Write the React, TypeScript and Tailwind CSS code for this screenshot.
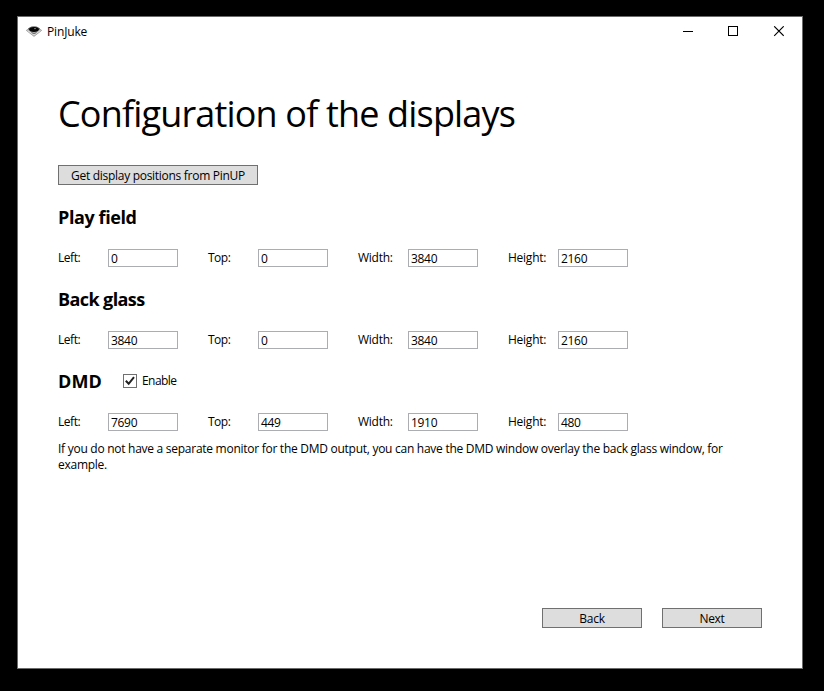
import React from "react";

type Area = { left: string; top: string; width: string; height: string };

function AppIcon() {
  return (
    <svg width="16" height="12" viewBox="0 0 16 12" className="shrink-0">
      <path d="M0.3 5.4 3 3.4H13L15.7 5.4 8 11.4Z" fill="#b4b4b4" stroke="#8a8a8a" strokeWidth="0.6" />
      <path d="M2 3.6Q8 -1.8 14 3.6L13 5H3Z" fill="#5c5c5c" />
      <path d="M3.4 2.9Q8 0 12.6 2.9" fill="none" stroke="#a8a8a8" strokeWidth="0.8" />
      <ellipse cx="8" cy="4.5" rx="4.8" ry="2.4" fill="#050505" />
      <circle cx="9" cy="3.6" r="0.6" fill="#ddd" />
      <path d="M1.6 5.6 8 10 14.4 5.6" fill="none" stroke="#e6e6e6" strokeWidth="0.9" />
      <path d="M5.5 7.6 8 8.6 10.5 7.6" fill="none" stroke="#555" strokeWidth="0.8" />
    </svg>
  );
}

function Field({ label, value, spacing }: { label: string; value: string; spacing: string }) {
  return (
    <div className="flex w-[150px] items-center">
      <span className={"w-[50px] " + spacing}>{label}</span>
      <div className="flex h-[18px] w-[70px] items-center border border-[#abadb3] pt-px pl-[2px] tracking-[-0.3px]">
        {value}
      </div>
    </div>
  );
}

function AreaRow({ area }: { area: Area }) {
  return (
    <div className="mt-5 flex h-[18px] leading-4">
      <Field label="Left:" value={area.left} spacing="tracking-[-0.45px]" />
      <Field label="Top:" value={area.top} spacing="tracking-[-0.5px]" />
      <Field label="Width:" value={area.width} spacing="tracking-[-0.27px]" />
      <Field label="Height:" value={area.height} spacing="tracking-[-0.25px]" />
    </div>
  );
}

function Heading({ children, spacing }: { children: React.ReactNode; spacing: string }) {
  return <h2 className={"text-[18px] leading-6 font-bold " + spacing}>{children}</h2>;
}

function PushButton({ children, size }: { children: React.ReactNode; size: string }) {
  return (
    <button
      className={"flex h-5 shrink-0 items-center justify-center border border-[#707070] bg-[#dddddd] pt-px leading-4 tracking-[-0.29px] " + size}
    >
      {children}
    </button>
  );
}

export default function App() {
  return (
    <div className="h-[691px] w-[824px] bg-black pt-4 pl-[17px]">
      <div className="flex h-[653px] w-[786px] flex-col border border-[#6b6b6b] bg-white font-['Open_Sans','Noto_Sans',sans-serif] text-[12px] text-black">
        <header className="flex h-[30px] shrink-0 items-center justify-between pl-2">
          <div className="flex items-center gap-[5px] leading-4">
            <div className="pb-[3px]">
              <AppIcon />
            </div>
            <span className="tracking-[-0.15px]">PinJuke</span>
          </div>
          <div className="flex pr-[18px] pb-[2px]">
            <svg width="101" height="11" viewBox="0 0 101 11" fill="none" stroke="#000">
              <path d="M0 5.5H10" shapeRendering="crispEdges" />
              <rect x="45.5" y="0.5" width="9" height="9" shapeRendering="crispEdges" />
              <path d="M91.2 0.3 100.7 9.8M100.7 0.3 91.2 9.8" strokeWidth="1.15" />
            </svg>
          </div>
        </header>
        <main className="flex flex-1 flex-col px-10 pt-[43px] pb-10">
          <h1 className="text-[36px] leading-[48px] tracking-[-0.83px] whitespace-nowrap">Configuration of the displays</h1>
          <div className="mt-[27px] mb-5 flex">
            <PushButton size="w-[200px]">Get display positions from PinUP</PushButton>
          </div>
          <Heading spacing="tracking-[-0.4px]">Play field</Heading>
          <AreaRow area={{ left: "0", top: "0", width: "3840", height: "2160" }} />
          <div className="mt-5">
            <Heading spacing="tracking-[-0.6px]">Back glass</Heading>
          </div>
          <AreaRow area={{ left: "3840", top: "0", width: "3840", height: "2160" }} />
          <div className="mt-5 flex items-center">
            <div className="w-[65px]">
              <Heading spacing="tracking-[0.1px]">DMD</Heading>
            </div>
            <div className="pb-px">
              <span className="flex size-[14px] items-center justify-center border border-[#707070]">
                <svg width="12" height="12" viewBox="0 0 12 12" fill="none" stroke="#212121" strokeWidth="2">
                  <path d="M1.8 5.7 4.7 8.8 10 2.2" />
                </svg>
              </span>
            </div>
            <span className="ml-[5px] leading-4 tracking-[-0.55px]">Enable</span>
          </div>
          <AreaRow area={{ left: "7690", top: "449", width: "1910", height: "480" }} />
          <p className="mt-[10px] leading-4 tracking-[-0.27px] whitespace-nowrap">
            If you do not have a separate monitor for the DMD output, you can have the DMD window overlay the back glass window, for
            <br />
            example.
          </p>
          <footer className="mt-auto flex justify-end gap-5">
            <PushButton size="w-[100px]">Back</PushButton>
            <PushButton size="w-[100px]">Next</PushButton>
          </footer>
        </main>
      </div>
    </div>
  );
}
